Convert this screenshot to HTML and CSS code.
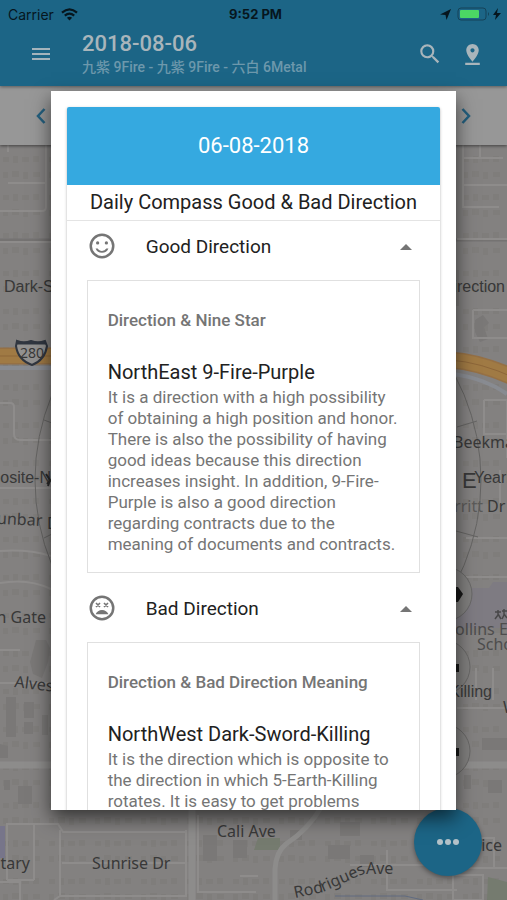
FILE: index.html
```html
<!DOCTYPE html>
<html lang="en">
<head>
<meta charset="utf-8">
<meta name="viewport" content="width=device-width, initial-scale=1">
<title>Daily Compass</title>
<link rel="stylesheet" href="styles.css">
</head>
<body>
<div class="app">
  <svg class="map" viewBox="0 0 507 900" preserveAspectRatio="xMidYMid slice" role="img" aria-label="Map">
    <defs>
      <pattern id="houses" width="46" height="38" patternUnits="userSpaceOnUse">
        <path d="M3 5h6v5H3zM13 4h5v7h-5zM22 5h7v5h-7zM33 4h6v6h-6zM3 20h5v6H3zM12 19h7v6h-7zM23 20h5v7h-5zM33 20h7v5h-7z" fill="#7f7d7b"/>
      </pattern>
    </defs>
    <rect width="507" height="900" fill="#838180"/>
    <rect width="507" height="900" fill="url(#houses)"/>
    <g fill="#7a7877">
      <path d="M36 640h10l4 8-2 14-6 16-9-4-3-12zM6 697h10v40H6zM24 702h10v16H24zM24 722h9v12h-9zM42 715h6v20h-6zM0 744l8 2v12H0zM18 786h14v18H18zM4 780h6v10H4z"/>
      <path d="M437 270h22v36h-22zM475 320l8-5 6 8-5 4 4 12-8 3-5-10zM482 738h25v12h-25zM488 780h14v13h-14zM464 775h7v14h-7z"/>
      <path d="M203 835h14v26h-14zM233 840h14v18h-14zM340 822h20v14h-20zM328 845h22v14h-22zM360 855h14v12h-14zM290 830h12v10h-12z"/>
    </g>
    <path d="M437 588h52l4-6h14v46h-70z" fill="#7e7b82"/>
    <path d="M0 826h5v32H0z" fill="#77758a"/>
    <path d="M258 838h22v12h-26zM488 877l19 5v18h-20z" fill="#757b6f"/>
    <g fill="none" stroke="#757372" stroke-width="3">
      <path d="M0 240h51M456 240h51"/>
    </g>
    <g fill="none" stroke="#8e8c8b" stroke-width="2">
      <path d="M8 140v12M8 183h38M0 211h42q4 0 4-4v-67M0 242h51M0 403h10q4 0 4 4v27q0 6 6 6h31M0 488h51"/>
      <path d="M0 551q28-2 51 5M0 583q28-5 51 6M0 650h20M0 683h51"/>
      <path d="M463 158h40M463 140v67h36M463 185h44M457 239h50M473 310h34M473 310v28h34M480 140v18M500 470v34M457 577h50M457 708h50"/>
      <path d="M484 400h23v58M484 400v34h23M466 538h41M476 668v32M493 668v32M472 838h22v30M456 868h51"/>
      <path d="M6 824h52l5 8h123M7 824v56M34 824v56M7 880h27M60 830v66h126V830M0 882h20v18M62 863h124M198 815v77h58M350 865h110M387 850v40h70M420 838v22M453 875h30v25h-30z"/>
      <path d="M60 896l-6 4M240 876h18"/>
    </g>
    <g fill="none" stroke="#8d8c8b">
      <path d="M0 765h51M456 765h51M192 810v90" stroke-width="7"/>
      <path d="M322 806q-14 24-36 38-10 8-11 25v31" stroke-width="5"/>
    </g>
    <path d="M335 896h70l18 4" fill="none" stroke="#606b80" stroke-width="1"/>
    <path d="M454 374q32 5 53 20" fill="none" stroke="#888b91" stroke-width="4"/>
    <path d="M0 368h51" stroke="#888b91" stroke-width="4"/>
    <g fill="none">
      <path d="M0 356h60M450 360q30 2 65 18" stroke="#957045" stroke-width="17"/>
      <path d="M0 356h60M450 360q30 2 65 18" stroke="#a07a44" stroke-width="14"/>
      <path d="M0 356h60M450 360q30 2 65 18" stroke="#8d6639" stroke-width="1"/>
    </g>
    <g fill="none" stroke="#656463">
      <circle cx="258" cy="480" r="223" stroke-width="1"/>
      <path d="M44 420l8 3M44 538l8-4M457 427l20-6M456 531l22 6"/>
    </g>
    <g fill="#807f7e" stroke="#696867">
      <circle cx="445" cy="594" r="27"/><circle cx="443" cy="667" r="27"/><circle cx="443" cy="751" r="27"/>
    </g>
    <path d="M455 587h3l5 7-5 8h-3zM455 664h4v8h-4zM455 748h4v8h-4z" fill="#181818"/>
    <path d="M17 341q7 3 14 0 7 3 14 0l2 5q-2 14-15 19-14-5-16-19z" fill="#929190" stroke="#303640" stroke-width="2"/>
    <path d="M17 343h29" stroke="#303640" stroke-width="3"/>
    <g class="map-text">
      <text x="20" y="358" font-size="14">280</text>
      <g class="map-arial" font-size="16">
        <text x="4" y="292">Dark-Sword-Killing</text>
        <text x="505" y="292" text-anchor="end">Direction</text>
        <text x="51" y="483" text-anchor="end">Opposite-N</text>
        <text x="462" y="488" font-size="22">E</text>
        <text x="474" y="483">Yearly</text>
        <text x="492" y="697" text-anchor="end">Killing</text>
      </g>
      <g font-size="16">
        <text x="42" y="526" text-anchor="end" transform="rotate(3 42 526)">Dunbar</text>
        <text x="47" y="529">Dr</text>
        <text x="46" y="623" text-anchor="end">Golden Gate</text>
        <text x="14" y="687" transform="rotate(7 14 687)">Alves</text>
        <text x="92" y="869">Sunrise Dr</text>
        <text x="217" y="837">Cali Ave</text>
        <text x="30" y="869" text-anchor="end">Military</text>
        <text x="502" y="851" text-anchor="end">Alice</text>
        <text x="453" y="448">Beekman</text>
        <text x="483" y="512" text-anchor="end" fill="#5b5a59">Merritt</text>
        <text x="487" y="512">Dr</text>
        <text x="503" y="713">W</text>
        <text x="445" y="635" fill="#4e4d4d">Collins Elem</text>
        <text x="477" y="650" fill="#4e4d4d">School</text>
        <text x="295" y="898" transform="rotate(-12 295 898)">Rod</text>
        <text x="323" y="892" transform="rotate(-24 323 892)">rigues</text>
        <text x="366" y="874">Ave</text>
      </g>
      <path d="M46 474l4 6-2 6M51 480l-4 4" stroke="#292929" stroke-width="2" fill="none"/>
      <g fill="none" stroke="#494849" stroke-width="1.5">
        <path d="M498 610v5l-3 4M498 614l3 5M495 612h6M504 609v6l-2 4M504 614l3 4M502 611h5"/>
      </g>
    </g>
  </svg>

  <header class="header">
    <div class="status">
      <div class="carrier">Carrier
        <svg width="17" height="13" viewBox="0 0 17 13" aria-hidden="true"><g fill="none" stroke="#06161e" stroke-width="2.2"><path d="M1 4.700q7.500-6.600 15 0M3.800 7.600q4.700-4 9.400 0"/></g><path d="M5.900 9.700q2.600-2 5.200 0L8.500 12.400z" fill="#06161e"/></svg>
      </div>
      <div class="clock">9:52 PM</div>
      <div class="battery">
        <svg width="63" height="16" viewBox="0 0 63 16" aria-hidden="true">
          <path d="M0 8.500L11 3 6.500 14l-1-5z" fill="#06161e"/>
          <rect x="18" y="2" width="28" height="12" rx="3" fill="none" stroke="#154258"/>
          <rect x="20" y="4" width="19" height="8" rx="1" fill="#4bd864"/>
          <path d="M48 6q2 2 0 4z" fill="#154258"/>
          <path d="M58 2l-5 7h3l-1 5 6-7h-4z" fill="#06161e"/>
        </svg>
      </div>
    </div>
    <div class="bar">
      <button class="icon-btn menu" aria-label="Menu"><svg width="20" height="14" viewBox="0 0 20 14"><path d="M1 2h18M1 7h18M1 12h18" stroke="#a4b4bc" stroke-width="2"/></svg></button>
      <div class="titles">
        <h1>2018-08-06</h1>
        <p>九紫 9Fire - 九紫 9Fire - 六白 6Metal</p>
      </div>
      <button class="icon-btn" aria-label="Search"><svg width="26" height="26" viewBox="0 0 24 24"><path fill="#a9b5bb" d="M15.500 14h-.79l-.28-.27A6.470 6.470 0 0 0 16 9.500 6.500 6.500 0 1 0 9.500 16c1.610 0 3.090-.59 4.230-1.570l.27.28v.79l5 4.990L20.490 19l-4.990-5zm-6 0C7.010 14 5 11.990 5 9.500S7.010 5 9.500 5 14 7.010 14 9.500 11.990 14 9.500 14z"/></svg></button>
      <button class="icon-btn" aria-label="Drop pin"><svg width="25" height="25" viewBox="0 0 24 24"><path fill="#a9b5bb" d="M18 8c0-3.310-2.690-6-6-6S6 4.690 6 8c0 4.500 6 11 6 11s6-6.500 6-11zm-8 0c0-1.100.9-2 2-2s2 .9 2 2-.89 2-2 2-2-.9-2-2zM5 20v2h14v-2H5z"/></svg></button>
    </div>
  </header>
  <nav class="pager" aria-label="Day">
    <button class="icon-btn" aria-label="Previous day"><svg width="12" height="18" viewBox="0 0 12 18"><path d="M9.500 2L3 9l6.500 7" fill="none" stroke="#235f7e" stroke-width="2.500"/></svg></button>
    <button class="icon-btn" aria-label="Next day"><svg width="12" height="18" viewBox="0 0 12 18"><path d="M2.500 2L9 9l-6.500 7" fill="none" stroke="#235f7e" stroke-width="2.500"/></svg></button>
  </nav>
  <button class="fab" aria-label="More"><svg width="24" height="8" viewBox="0 0 24 8"><g fill="#b4c2c9"><circle cx="4" cy="4" r="3"/><circle cx="12" cy="4" r="3"/><circle cx="20" cy="4" r="3"/></g></svg></button>

  <div class="overlay">
    <main class="dialog" role="dialog" aria-label="Daily compass">
      <article class="card">
        <h2 class="date">06-08-2018</h2>
        <p class="caption">Daily Compass Good &amp; Bad Direction</p>
        <section>
          <button class="row" aria-expanded="true">
            <svg class="face" width="30" height="30" viewBox="0 0 24 24"><g fill="#757575"><path d="M12 2a10 10 0 1 0 0 20 10 10 0 0 0 0-20zm0 18a8 8 0 1 1 0-16 8 8 0 0 1 0 16z"/><circle cx="8.500" cy="9.500" r="1.300"/><circle cx="15.500" cy="9.500" r="1.300"/><path d="M12 16c-1.480 0-2.750-.81-3.450-2H6.880a5.500 5.500 0 0 0 10.240 0h-1.670A3.990 3.990 0 0 1 12 16z"/></g></svg>
            <span>Good Direction</span>
            <svg width="12" height="7" viewBox="0 0 12 7"><path d="M0 7l6-6 6 6z" fill="#757575"/></svg>
          </button>
          <div class="box">
            <h3>Direction &amp; Nine Star</h3>
            <h4>NorthEast 9-Fire-Purple</h4>
            <p>It is a direction with a high possibility of obtaining a high position and honor. There is also the possibility of having good ideas because this direction increases insight. In addition, 9-Fire-Purple is also a good direction regarding contracts due to the meaning of documents and contracts.</p>
          </div>
        </section>
        <section>
          <button class="row" aria-expanded="true">
            <svg class="face" width="30" height="30" viewBox="0 0 24 24"><g fill="#757575"><path d="M12 2a10 10 0 1 0 0 20 10 10 0 0 0 0-20zm0 18a8 8 0 1 1 0-16 8 8 0 0 1 0 16z"/><path d="M12 13.500c-2.330 0-4.310 1.460-5.110 3.500h10.220c-.8-2.040-2.780-3.500-5.110-3.500z"/></g><path d="M7.200 8l3.200 3.200m0-3.200l-3.200 3.200M13.600 8l3.200 3.200m0-3.200l-3.200 3.200" stroke="#757575" stroke-width="1.300"/></svg>
            <span>Bad Direction</span>
            <svg width="12" height="7" viewBox="0 0 12 7"><path d="M0 7l6-6 6 6z" fill="#757575"/></svg>
          </button>
          <div class="box">
            <h3>Direction &amp; Bad Direction Meaning</h3>
            <h4>NorthWest Dark-Sword-Killing</h4>
            <p>It is the direction which is opposite to the direction in which 5-Earth-Killing rotates. It is easy to get problems</p>
          </div>
        </section>
      </article>
    </main>
  </div>
</div>
</body>
</html>
```
FILE: styles.css
```css
* { box-sizing: border-box; }

body {
  margin: 0;
  font-family: Roboto, "Noto Sans CJK JP", sans-serif;
  color: #212121;
}

h1, h2, h3, h4, p { margin: 0; font-weight: 400; }

button {
  border: 0;
  padding: 0;
  background: none;
  font: inherit;
  color: inherit;
}

svg { display: block; }

.app {
  position: relative;
  height: 100vh;
  overflow: hidden;
}

.map {
  position: absolute;
  inset: 0;
  width: 100%;
  height: 100%;
}

.map-text { font-family: "Noto Sans", sans-serif; fill: #383838; }
.map-arial { font-family: "Liberation Sans", sans-serif; }

.header {
  position: relative;
  background: #1c6586;
  box-shadow: 0 1px 3px rgba(0, 0, 0, 0.4);
  z-index: 1;
}

.status {
  display: grid;
  grid-template-columns: 1fr auto 1fr;
  align-items: center;
  height: 28px;
  padding: 0 4px 0 8px;
  font-family: Inter, sans-serif;
  font-size: 14px;
  color: #06161e;
}

.carrier { display: flex; align-items: center; gap: 7px; }
.clock { font-size: 13px; font-weight: 700; }
.battery { justify-self: end; }

.bar {
  display: flex;
  align-items: center;
  height: 58px;
  padding: 0 14px 6px 30px;
}

.icon-btn {
  display: grid;
  place-items: center;
  width: 42px;
  height: 42px;
}

.menu { width: 22px; }

.titles { flex: 1; margin-left: 30px; }

.titles h1 {
  font-size: 22px;
  line-height: 26px;
  font-weight: 500;
  color: #a9b5bb;
}

.titles p {
  font-size: 14px;
  line-height: 20px;
  font-weight: 500;
  color: #6d98ac;
}

.pager {
  position: relative;
  display: flex;
  justify-content: space-between;
  align-items: center;
  height: 59px;
  padding: 0 20px;
  background: #979797;
  box-shadow: 0 1px 3px rgba(0, 0, 0, 0.5);
}

.fab {
  position: absolute;
  right: 25px;
  bottom: 24px;
  display: grid;
  place-items: center;
  width: 68px;
  height: 68px;
  border-radius: 50%;
  background: #1c6586;
  box-shadow: 0 2px 5px rgba(0, 0, 0, 0.4);
}

.overlay {
  position: absolute;
  inset: 0;
  z-index: 2;
  padding: 91px 10vw 90px;
}

.dialog {
  height: 100%;
  overflow: hidden;
  padding: 16px;
  background: #fff;
  box-shadow: 0 8px 18px rgba(0, 0, 0, 0.6);
}

.card {
  border-radius: 2px;
  box-shadow: 0 1px 3px rgba(0, 0, 0, 0.3);
}

.date {
  padding: 24px 0;
  border-radius: 2px 2px 0 0;
  background: #35a9e0;
  font-size: 22px;
  line-height: 30px;
  text-align: center;
  color: #fff;
}

.caption {
  border-bottom: 1px solid #e4e4e4;
  font-size: 20px;
  line-height: 35px;
  text-align: center;
}

.row {
  display: flex;
  align-items: center;
  width: 100%;
  height: 50px;
  padding: 0 28px 0 20px;
  font-size: 19px;
  text-align: left;
}

.row span { flex: 1; margin-left: 29px; }

.box {
  margin: 9px 20px 10px;
  padding: 28px 20px 17px;
  border: 1px solid #e0e0e0;
}

.box h3 {
  margin-bottom: 28px;
  font-size: 17px;
  line-height: 22px;
  font-weight: 500;
  color: #757575;
}

.box h4 {
  margin-bottom: 2px;
  font-size: 20px;
  line-height: 26px;
}

.box p {
  font-size: 17px;
  line-height: 21px;
  color: #757575;
}
```
